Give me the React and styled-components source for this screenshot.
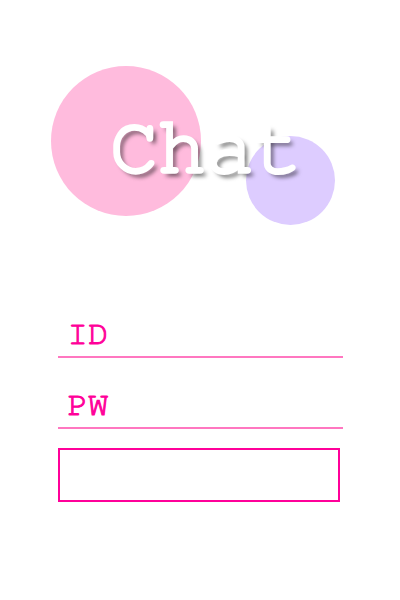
import styled, { createGlobalStyle } from "styled-components"

const Global = createGlobalStyle`
    body {
        margin:0;
        background:#ffffff;
        font-family:"FreeMono", "Liberation Mono", monospace;
    }
`

const Page = styled.div`
    width:400px;
    height:600px;
    display:flex;
    flex-direction:column;
    align-items:center;
`

const Hero = styled.div`
    position:relative;
    width:400px;
    height:308px;
    display:flex;
    justify-content:center;
`

const Circle = styled.div`
    position:absolute;
    left:${p => p.x}px;
    top:${p => p.y}px;
    width:${p => p.size}px;
    height:${p => p.size}px;
    border-radius:50%;
    background:${p => p.color};
`

const Title = styled.h1`
    position:relative;
    margin:98px 0 0 12px;
    font-family:"FreeMono", "Liberation Mono", monospace;
    font-weight:normal;
    font-size:80px;
    line-height:100px;
    color:#ffffff;
    -webkit-text-stroke:3.5px #ffffff;
    text-shadow:4px 4px 4px rgba(0,0,0,0.65);
    height:100px;
`

const Form = styled.form`
    width:285px;
    display:flex;
    flex-direction:column;
    gap:21px;
`

const Input = styled.input`
    border:none;
    border-bottom:2px solid #ff77c0;
    outline:none;
    height:50px;
    padding:4px 0 0 10px;
    font-family:"FreeMono", "Liberation Mono", monospace;
    font-size:34px;
    color:#ff0099;
    -webkit-text-stroke:1px #ff0099;
    background:transparent;
    box-sizing:border-box;

    &::placeholder {
        color:#ff0099;
    }
`

const Button = styled.button`
    margin-top:-2px;
    width:282px;
    height:54px;
    border:2px solid #ff0099;
    background:#ffffff;
    box-sizing:border-box;
    cursor:pointer;
`

export default function App() {
    return (
        <>
            <Global />
            <Page>
                <Hero>
                    <Circle x={51} y={66} size={150} color="#ffbbdd" />
                    <Circle x={246} y={136} size={89} color="#ddccff" />
                    <Title>Chat</Title>
                </Hero>
                <Form>
                    <Input placeholder="ID" />
                    <Input type="password" placeholder="PW" />
                    <Button type="button"></Button>
                </Form>
            </Page>
        </>
    )
}
